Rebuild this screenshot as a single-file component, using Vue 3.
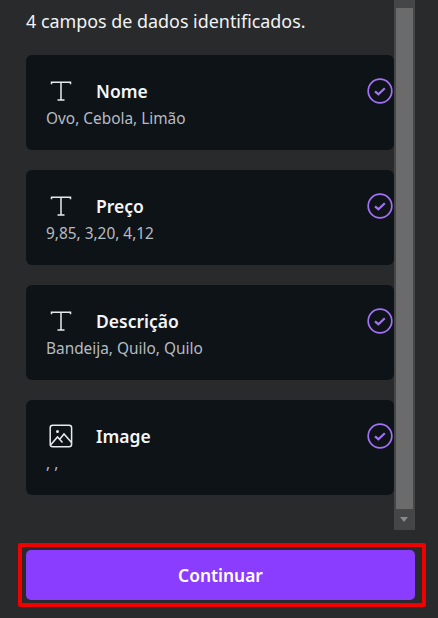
<script setup>
const fields = [
  { name: 'Nome', sample: 'Ovo, Cebola, Limão', icon: 'text' },
  { name: 'Preço', sample: '9,85, 3,20, 4,12', icon: 'text' },
  { name: 'Descrição', sample: 'Bandeija, Quilo, Quilo', icon: 'text' },
  { name: 'Image', sample: ', ,', icon: 'image' }
]
</script>

<template>
  <div class="panel">
    <div class="scroll-area">
      <div class="content">
        <p class="intro">4 campos de dados identificados.</p>
        <ul class="fields">
          <li class="field" v-for="field in fields" :key="field.name">
            <div class="field-head">
              <svg v-if="field.icon === 'text'" class="type-icon" width="24" height="24" viewBox="0 0 24 24" fill="none" stroke="#e8ebed" stroke-width="1.5">
                <path d="M2.5 5.2V3.2h19v2M12 3.2v18M8.5 21h7" />
              </svg>
              <svg v-else class="type-icon" width="24" height="24" viewBox="0 0 24 24" fill="none" stroke="#e8ebed" stroke-width="1.5">
                <rect x="1.2" y="1.2" width="21.4" height="21.6" rx="2.5" />
                <circle cx="8.5" cy="7.4" r="1.5" fill="#e8ebed" stroke="none" />
                <path d="M2 20.5l6.5-7.5 5 5.5M10.5 15.5l4.5-5.5 7.5 8.5" />
              </svg>
              <span class="field-name">{{ field.name }}</span>
            </div>
            <p class="field-sample">{{ field.sample }}</p>
            <svg class="check" width="26" height="26" viewBox="0 0 26 26" fill="none" stroke="#a371f7">
              <circle cx="13" cy="13" r="11.8" stroke-width="1.7" />
              <path d="M8 13.3l3.4 2.9 6.4-6" stroke-width="2.2" />
            </svg>
          </li>
        </ul>
      </div>
      <div class="scrollbar">
        <div class="thumb"></div>
        <div class="arrow"></div>
      </div>
    </div>
    <div class="footer">
      <button class="continue">Continuar</button>
    </div>
  </div>
</template>

<style scoped>
.panel {
  width: 438px;
  height: 618px;
  background: #292a2c;
  font-family: "Noto Sans", sans-serif;
  color: #fff;
  overflow: hidden;
}

.scroll-area {
  display: flex;
  height: 530px;
  padding-left: 26px;
}

.content {
  width: 368px;
}

.intro {
  margin: 0;
  padding-top: 8px;
  height: 55px;
  box-sizing: border-box;
  font-size: 17.9px;
  line-height: 26px;
  color: #f1f3f4;
}

.fields {
  list-style: none;
  margin: 0;
  padding: 0;
  display: flex;
  flex-direction: column;
  gap: 20px;
}

.field {
  position: relative;
  height: 95px;
  box-sizing: border-box;
  padding: 24px 20px 0;
  background: #0e1318;
  border-radius: 6px;
}

.field-head {
  display: flex;
  align-items: center;
  height: 24px;
}

.type-icon {
  margin-left: 3px;
  flex-shrink: 0;
}

.field-name {
  margin-left: 23px;
  font-size: 17.5px;
  font-weight: 600;
  color: #f4f5f6;
}

.field-sample {
  margin: 6px 0 0;
  font-size: 15.4px;
  line-height: 20px;
  color: #b6bcc3;
}

.check {
  position: absolute;
  top: 23px;
  right: 1px;
}

.scrollbar {
  position: relative;
  width: 21px;
  height: 530px;
  background: #454647;
}

.thumb {
  position: absolute;
  left: 2px;
  top: 8px;
  width: 17px;
  height: 501px;
  background: #6b6b6b;
}

.arrow {
  position: absolute;
  left: 6px;
  top: 517px;
  width: 0;
  height: 0;
  border-left: 4.5px solid transparent;
  border-right: 4.5px solid transparent;
  border-top: 5px solid #8a8a8a;
}

.footer {
  margin: 13px 0 0 18px;
  width: 408px;
  height: 64px;
  box-sizing: border-box;
  border: 4px solid #f10000;
  border-radius: 2px;
  padding: 3px 7px 0 4px;
}

.continue {
  display: block;
  width: 100%;
  height: 50px;
  border: none;
  border-radius: 5px;
  background: #8b3dff;
  color: #fff;
  font-family: inherit;
  font-size: 17.4px;
  font-weight: 600;
}
</style>
